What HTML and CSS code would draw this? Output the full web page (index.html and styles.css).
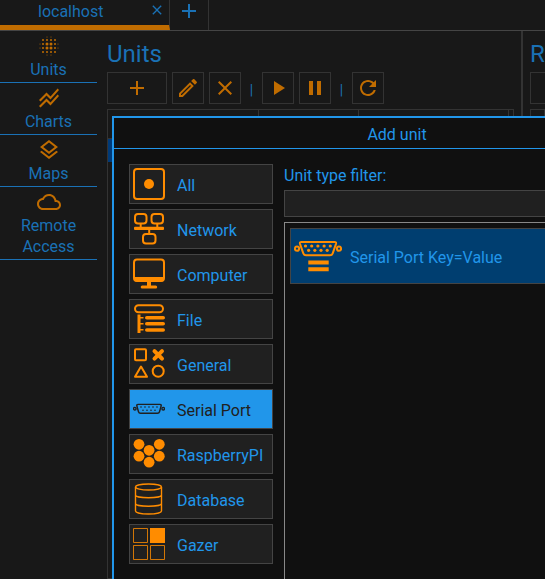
FILE: index.html
```
<!DOCTYPE html>
<html lang="en">
<head>
<meta charset="utf-8">
<title>localhost</title>
<link rel="stylesheet" href="styles.css">
</head>
<body>
<div class="app">
  <header class="tabs">
    <div class="tab">
      <a class="tab-name" href="#">localhost</a>
      <button class="tab-close" aria-label="Close tab"><svg width="16" height="16" viewBox="0 0 24 24"><path d="M19 6.41L17.59 5 12 10.59 6.41 5 5 6.41 10.59 12 5 17.59 6.41 19 12 13.41 17.59 19 19 17.59 13.41 12z"/></svg></button>
    </div>
    <button class="tab-add" aria-label="Add tab"><svg class="icon" viewBox="0 0 24 24"><path d="M19 12h-6v6h-2v-6H5v-2h6V4h2v6h6v2z"/></svg></button>
  </header>
  <div class="body">
    <nav class="nav">
      <a class="nav-item" href="#"><svg class="icon" viewBox="0 0 24 24">
        <g><circle cx="10" cy="10" r="1.5"/><circle cx="14" cy="10" r="1.5"/><circle cx="10" cy="14" r="1.5"/><circle cx="14" cy="14" r="1.5"/>
        <circle cx="6" cy="6" r="1"/><circle cx="10" cy="6" r="1"/><circle cx="14" cy="6" r="1"/><circle cx="18" cy="6" r="1"/>
        <circle cx="6" cy="10" r="1"/><circle cx="18" cy="10" r="1"/><circle cx="6" cy="14" r="1"/><circle cx="18" cy="14" r="1"/>
        <circle cx="6" cy="18" r="1"/><circle cx="10" cy="18" r="1"/><circle cx="14" cy="18" r="1"/><circle cx="18" cy="18" r="1"/>
        <circle cx="10" cy="3" r=".5"/><circle cx="14" cy="3" r=".5"/><circle cx="10" cy="21" r=".5"/><circle cx="14" cy="21" r=".5"/>
        <circle cx="3" cy="10" r=".5"/><circle cx="3" cy="14" r=".5"/><circle cx="21" cy="10" r=".5"/><circle cx="21" cy="14" r=".5"/></g></svg>
        <span>Units</span></a>
      <a class="nav-item" href="#"><svg class="icon" viewBox="0 0 24 24"><path d="M2 19.99l7.5-7.51 4 4 7.09-7.97L22 9.92l-8.5 9.56-4-4-6 6.01L2 19.99zm1.5-4.5l6-6.01 4 4L22 3.92l-1.41-1.41-7.09 7.97-4-4L2 13.99l1.5 1.5z"/></svg><span>Charts</span></a>
      <a class="nav-item" href="#"><svg class="icon" viewBox="0 0 24 24"><path d="M11.99 18.54l-7.37-5.73L3 14.07l9 7 9-7-1.63-1.27-7.38 5.74zM12 16l7.36-5.73L21 9l-9-7-9 7 1.63 1.27L12 16zm0-11.47L17.74 9 12 13.47 6.26 9 12 4.53z"/></svg><span>Maps</span></a>
      <a class="nav-item" href="#"><svg class="icon" viewBox="0 0 24 24"><path d="M19.35 10.04C18.67 6.59 15.64 4 12 4 9.11 4 6.6 5.64 5.35 8.04 2.34 8.36 0 10.91 0 14c0 3.31 2.69 6 6 6h13c2.76 0 5-2.24 5-5 0-2.64-2.05-4.78-4.65-4.96zM19 18H6c-2.21 0-4-1.79-4-4 0-2.05 1.53-3.76 3.56-3.97l1.07-.11.5-.95C8.08 7.14 9.94 6 12 6c2.62 0 4.88 1.86 5.39 4.43l.3 1.5 1.53.11c1.56.1 2.78 1.41 2.78 2.96 0 1.65-1.35 3-3 3z"/></svg><span>Remote Access</span></a>
    </nav>
    <main class="units">
      <h1>Units</h1>
      <div class="toolbar">
        <button class="tool wide" aria-label="Add"><svg class="icon" viewBox="0 0 24 24"><path d="M19 13h-6v6h-2v-6H5v-2h6V5h2v6h6v2z"/></svg></button>
        <button class="tool" aria-label="Edit"><svg class="icon" viewBox="0 0 24 24"><path d="M14.06 9.02l.92.92L5.92 19H5v-.92l9.06-9.06M17.66 3c-.25 0-.51.1-.7.29l-1.83 1.83 3.75 3.75 1.83-1.83c.39-.39.39-1.02 0-1.41l-2.34-2.34c-.2-.2-.45-.29-.71-.29zm-3.6 3.19L3 17.25V21h3.75L17.81 9.94l-3.75-3.75z"/></svg></button>
        <button class="tool" aria-label="Remove"><svg class="icon" viewBox="0 0 24 24"><path d="M19 6.41L17.59 5 12 10.59 6.41 5 5 6.41 10.59 12 5 17.59 6.41 19 12 13.41 17.59 19 19 17.59 13.41 12z"/></svg></button>
        <span class="sep">|</span>
        <button class="tool" aria-label="Start"><svg class="icon" viewBox="0 0 24 24"><path d="M8 5v14l11-7z"/></svg></button>
        <button class="tool" aria-label="Pause"><svg class="icon" viewBox="0 0 24 24"><path d="M6 19h4V5H6v14zm8-14v14h4V5h-4z"/></svg></button>
        <span class="sep">|</span>
        <button class="tool" aria-label="Refresh"><svg class="icon" viewBox="0 0 24 24"><path d="M17.65 6.35C16.2 4.9 14.21 4 12 4c-4.42 0-7.99 3.58-7.99 8s3.57 8 7.99 8c3.73 0 6.84-2.55 7.73-6h-2.08c-.82 2.33-3.04 4-5.65 4-3.31 0-6-2.69-6-6s2.69-6 6-6c1.66 0 3.14.69 4.22 1.78L13 11h7V4l-2.35 2.35z"/></svg></button>
      </div>
      <div class="grid">
        <div class="grid-head"><span></span><span></span><span></span></div>
        <div class="grid-row"></div>
      </div>
    </main>
    <section class="side">
      <h1>R</h1>
      <div class="toolbar"><button class="tool wide" aria-label="Open"></button></div>
      <div class="grid"></div>
    </section>
  </div>

  <div class="dialog" role="dialog" aria-labelledby="dialog-title">
    <h2 id="dialog-title">Add unit</h2>
    <div class="dialog-body">
      <div class="categories">
        <button class="category"><svg viewBox="0 0 32 32"><rect class="line" x="1" y="1" width="30" height="30" rx="3"/><circle cx="16" cy="16" r="5"/></svg>All</button>
        <button class="category"><svg viewBox="0 0 32 32"><g class="line"><rect x="2" y="1" width="11.500" height="9.500" rx="3"/><rect x="18.500" y="1" width="11.500" height="9.500" rx="3"/><rect x="10" y="21" width="12.500" height="9.500" rx="3"/><path d="M7.700 11v3M24.300 11v3M16.200 17v3"/></g><rect x="1" y="13.700" width="30" height="3.200" rx="1"/></svg>Network</button>
        <button class="category"><svg viewBox="0 0 32 32"><rect class="line" x="1" y="1.500" width="30" height="21.500" rx="3"/><path d="M1 19h30v2.500a2 2 0 0 1-2 2H3a2 2 0 0 1-2-2zM14 23h4v5h-4z"/><rect x="7.700" y="27.500" width="16.500" height="3" rx="1.500"/></svg>Computer</button>
        <button class="category"><svg viewBox="0 0 32 32"><rect class="line" x="2" y="2.300" width="28" height="7" rx="3.500"/><path d="M4.500 11.500h3v2.500h3v1.500h-3v4.500h3v1.500h-3v4.500h3v1.500h-3V30h-3z"/><rect x="12" y="13" width="20" height="3.600" rx="1.800"/><rect x="12" y="19" width="20" height="3.600" rx="1.800"/><rect x="12" y="25.200" width="20" height="3.600" rx="1.800"/></svg>File</button>
        <button class="category"><svg viewBox="0 0 32 32"><g class="line"><rect x="2" y="1.300" width="11" height="11" rx="1"/><path d="M8 18.500L14 28.800H2z"/><circle cx="25.200" cy="23.200" r="5.500"/></g><path class="line cross" d="M21.500 3.200l7.500 7.500M29 3.200l-7.500 7.500"/></svg>General</button>
        <button class="category selected"><svg viewBox="0 0 32 32"><g class="line thin"><path d="M5 11.400h22q1.500 0 1.200 1.400l-1.700 6q-.4 1.500-2 1.500h-17q-1.600 0-2-1.500l-1.700-6Q3.500 11.400 5 11.400z"/><circle cx="1.800" cy="15.700" r="1.300"/><circle cx="30.200" cy="15.700" r="1.300"/></g><path class="pins" d="M8 14h0M12 14h0M16 14h0M20 14h0M24 14h0M10 17.300h0M14 17.300h0M18 17.300h0M22 17.300h0"/></svg>Serial Port</button>
        <button class="category"><svg viewBox="0 0 32 32"><circle cx="6" cy="6.300" r="5.400"/><circle cx="26.300" cy="6.300" r="5.400"/><circle cx="16.100" cy="12.300" r="5.400"/><circle cx="6" cy="18.200" r="5.400"/><circle cx="26.300" cy="18.200" r="5.400"/><circle cx="16.100" cy="24.200" r="5.400"/></svg>RaspberryPI</button>
        <button class="category"><svg viewBox="0 0 32 32"><g class="line thin"><ellipse cx="15.500" cy="4" rx="13" ry="3"/><path d="M2.500 4v24c0 1.700 5.800 3 13 3s13-1.300 13-3V4M2.500 12c0 1.600 5.800 2.800 13 2.800s13-1.200 13-2.800M2.500 20.500c0 1.600 5.800 2.800 13 2.800s13-1.200 13-2.800"/></g></svg>Database</button>
        <button class="category"><svg viewBox="0 0 32 32"><path class="line hair" d="M.5.500h14v14H.500zM.5 17.500h14v14H.500zM17.500 17.500h14v14h-14z"/><path d="M17 0h15v15H17z"/></svg>Gazer</button>
      </div>
      <div class="types">
        <label for="filter">Unit type filter:</label>
        <input id="filter" type="text">
        <div class="type-list">
          <button class="type"><svg viewBox="0 0 48 48"><g class="line"><path d="M7.500 10h33q2 0 1.500 1.800l-3.300 9.500q-.6 2-2.700 2H12q-2.100 0-2.700-2L6 11.800Q5.500 10 7.500 10z"/><circle cx="3" cy="16.700" r="2.100"/><circle cx="45" cy="16.700" r="2.100"/></g><g><circle cx="11.500" cy="14" r="1.600"/><circle cx="17.700" cy="14" r="1.600"/><circle cx="23.900" cy="14" r="1.600"/><circle cx="30.100" cy="14" r="1.600"/><circle cx="36.300" cy="14" r="1.600"/><circle cx="14.600" cy="18.300" r="1.600"/><circle cx="20.800" cy="18.300" r="1.600"/><circle cx="27" cy="18.300" r="1.600"/><circle cx="33.200" cy="18.300" r="1.600"/></g><path d="M14.300 28.500h20.400v4H14.300zM14.300 35.300h20.400v4H14.300z"/></svg>Serial Port Key=Value</button>
        </div>
      </div>
    </div>
  </div>
</div>
</body>
</html>
```
FILE: styles.css
```
* { box-sizing: border-box; }

body {
  margin: 0;
  background: #181818;
  color: #1a71b5;
  font: 16px/21px Roboto, sans-serif;
}

button, input {
  margin: 0;
  padding: 0;
  border: 0;
  border-radius: 0;
  background: none;
  color: inherit;
  font: inherit;
}

a { color: inherit; text-decoration: none; }

svg { display: block; flex: none; fill: currentColor; }

.icon { width: 24px; height: 24px; }

.app {
  position: relative;
  display: flex;
  flex-direction: column;
  height: 100vh;
  overflow: hidden;
}

.tabs {
  display: flex;
  flex: none;
  height: 31px;
  border-bottom: 1px solid #444;
}

.tab {
  display: flex;
  width: 170px;
  border-right: 1px solid #333;
  border-bottom: 5px solid #c06c00;
}

.tab-name { flex: 1; padding-left: 38px; line-height: 24px; }

.tab-close { display: flex; padding: 2px 4px; }

.tab-add {
  display: flex;
  justify-content: center;
  width: 39px;
  border-right: 1px solid #333;
}

.body { display: flex; flex: 1; min-height: 0; }

.nav { flex: none; width: 97px; }

.nav-item {
  display: flex;
  flex-direction: column;
  gap: 1px;
  align-items: center;
  padding: 3px 0 2px;
  border-bottom: 1px solid #1a71b5;
  text-align: center;
}

.nav-item svg, .tool { color: #c06c00; }

.nav-item span { padding: 0 16px; }

.units { flex: 1; min-width: 0; padding: 9px 7px 0 10px; display: flex; flex-direction: column; }

.side {
  display: flex;
  flex-direction: column;
  flex: none;
  width: 24px;
  padding: 9px 0 0 7px;
  border-left: 2px solid #333;
  overflow: hidden;
}

h1 { margin: 0 0 4px; font-size: 24px; font-weight: 400; line-height: 28px; }

.toolbar { display: flex; gap: 5px; flex: none; height: 32px; margin-bottom: 5px; }

.tool {
  display: flex;
  flex: none;
  align-items: center;
  justify-content: center;
  width: 32px;
  height: 32px;
  border: 1px solid #333;
}

.tool.wide { width: 60px; }

.sep { width: 11px; font-size: 14px; line-height: 36px; text-align: center; }

.grid { flex: 1; border: 1px solid #333; }

.grid-head {
  display: grid;
  grid-template-columns: 151px 100px 1fr;
  height: 29px;
  padding-right: 4px;
  border-bottom: 1px solid #333;
}

.grid-head span { border-right: 1px solid #333; }

.grid-row { height: 23px; background: #003a78; }

.dialog {
  position: absolute;
  top: 116px;
  left: 112px;
  bottom: -32px;
  display: flex;
  flex-direction: column;
  width: 570px;
  border: 2px solid #2196ea;
  background: #101010;
  color: #2196ea;
}

h2 {
  margin: 0;
  padding-top: 4px;
  border-bottom: 1px solid #2196ea;
  font-size: 16px;
  font-weight: 400;
  line-height: 26px;
  text-align: center;
}

.dialog-body { display: flex; flex: 1; gap: 11px; padding: 15px; }

.categories { display: flex; flex-direction: column; gap: 5px; width: 144px; }

.category, .type {
  display: flex;
  align-items: flex-start;
  padding: 3px;
  border: 1px solid #444;
  background: #202020;
  white-space: nowrap;
  text-align: left;
}

.category { gap: 12px; height: 40px; line-height: 35px; }

.category svg { width: 32px; height: 32px; color: #ff8c00; }

.category.selected, .category.selected svg { color: #202020; }

.category.selected { background: #2196ea; }

.line { fill: none; stroke: currentColor; stroke-width: 2; stroke-linejoin: round; }

.thin { stroke-width: 1.4; }

.hair { stroke-width: 1; opacity: .8; }

.cross { stroke-width: 4; stroke-linecap: round; }

.pins { fill: none; stroke: currentColor; stroke-width: 1.6; stroke-linecap: round; }

.types { display: flex; flex: 1; flex-direction: column; }

.types label { height: 26px; line-height: 24px; }

.types input {
  height: 27px;
  margin-bottom: 5px;
  padding: 0 4px;
  border: 1px solid #444;
  background: #202020;
}

.type-list { flex: 1; padding: 5px; border: 1px solid #888; }

.type {
  gap: 8px;
  width: 100%;
  height: 56px;
  line-height: 51px;
  background: #003e70;
}

.type svg { width: 48px; height: 48px; color: #ff8c00; }
```
